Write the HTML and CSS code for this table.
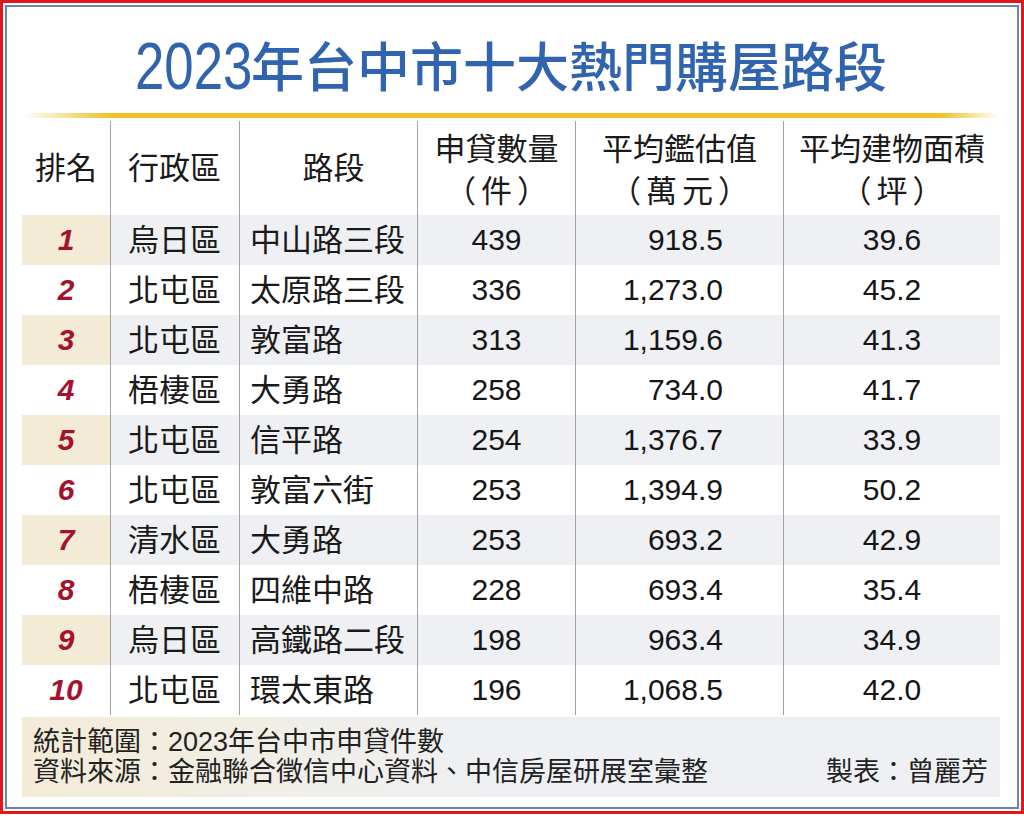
FILE: index.html
```html
<!DOCTYPE html>
<html lang="zh-Hant">
<head>
<meta charset="utf-8">
<title>2023年台中市十大熱門購屋路段</title>
<link rel="stylesheet" href="styles.css">
</head>
<body>
<div class="frame">
  <div class="inner">
    <h1 class="title"><span class="title-num">2023</span>年台中市十大熱門購屋路段</h1>
    <div class="gold-line"></div>
    <div class="table">
      <div class="row head">
        <div class="cell c1">排名</div>
        <div class="cell c2">行政區</div>
        <div class="cell c3 center">路段</div>
        <div class="cell c4 center two"><span>申貸數量</span><span class="unit">（件）</span></div>
        <div class="cell c5 center two"><span>平均鑑估值</span><span class="unit">（萬元）</span></div>
        <div class="cell c6 center two"><span>平均建物面積</span><span class="unit">（坪）</span></div>
      </div>
      <div class="row shade">
        <div class="cell c1 rank">1</div><div class="cell c2">烏日區</div><div class="cell c3">中山路三段</div><div class="cell c4 num">439</div><div class="cell c5 num">918.5</div><div class="cell c6 num">39.6</div>
      </div>
      <div class="row">
        <div class="cell c1 rank">2</div><div class="cell c2">北屯區</div><div class="cell c3">太原路三段</div><div class="cell c4 num">336</div><div class="cell c5 num">1,273.0</div><div class="cell c6 num">45.2</div>
      </div>
      <div class="row shade">
        <div class="cell c1 rank">3</div><div class="cell c2">北屯區</div><div class="cell c3">敦富路</div><div class="cell c4 num">313</div><div class="cell c5 num">1,159.6</div><div class="cell c6 num">41.3</div>
      </div>
      <div class="row">
        <div class="cell c1 rank">4</div><div class="cell c2">梧棲區</div><div class="cell c3">大勇路</div><div class="cell c4 num">258</div><div class="cell c5 num">734.0</div><div class="cell c6 num">41.7</div>
      </div>
      <div class="row shade">
        <div class="cell c1 rank">5</div><div class="cell c2">北屯區</div><div class="cell c3">信平路</div><div class="cell c4 num">254</div><div class="cell c5 num">1,376.7</div><div class="cell c6 num">33.9</div>
      </div>
      <div class="row">
        <div class="cell c1 rank">6</div><div class="cell c2">北屯區</div><div class="cell c3">敦富六街</div><div class="cell c4 num">253</div><div class="cell c5 num">1,394.9</div><div class="cell c6 num">50.2</div>
      </div>
      <div class="row shade">
        <div class="cell c1 rank">7</div><div class="cell c2">清水區</div><div class="cell c3">大勇路</div><div class="cell c4 num">253</div><div class="cell c5 num">693.2</div><div class="cell c6 num">42.9</div>
      </div>
      <div class="row">
        <div class="cell c1 rank">8</div><div class="cell c2">梧棲區</div><div class="cell c3">四維中路</div><div class="cell c4 num">228</div><div class="cell c5 num">693.4</div><div class="cell c6 num">35.4</div>
      </div>
      <div class="row shade">
        <div class="cell c1 rank">9</div><div class="cell c2">烏日區</div><div class="cell c3">高鐵路二段</div><div class="cell c4 num">198</div><div class="cell c5 num">963.4</div><div class="cell c6 num">34.9</div>
      </div>
      <div class="row">
        <div class="cell c1 rank">10</div><div class="cell c2">北屯區</div><div class="cell c3">環太東路</div><div class="cell c4 num">196</div><div class="cell c5 num">1,068.5</div><div class="cell c6 num">42.0</div>
      </div>
    </div>
    <div class="footer">
      <div class="foot-line">統計範圍：2023年台中市申貸件數</div>
      <div class="foot-line split"><span>資料來源：金融聯合徵信中心資料、中信房屋研展室彙整</span><span>製表：曾麗芳</span></div>
    </div>
  </div>
</div>
</body>
</html>
```

FILE: styles.css
```css
html, body {
  margin: 0;
  padding: 0;
  background: #ffffff;
}

body {
  font-family: "Liberation Sans", "Noto Sans CJK TC", sans-serif;
  color: #1a1a1a;
  text-spacing-trim: space-all;
}

.frame {
  width: 1024px;
  height: 814px;
  box-sizing: border-box;
  border: 3px solid #e3161c;
  padding: 2px;
  background: #ffffff;
}

.inner {
  height: 100%;
  box-sizing: border-box;
  border: 2px solid #6d83ad;
  padding: 0 17px 0 15px;
  display: flex;
  flex-direction: column;
}

.title {
  margin: 0;
  height: 106px;
  box-sizing: border-box;
  padding-top: 8px;
  display: flex;
  align-items: center;
  justify-content: center;
  font-family: "Noto Sans CJK TC", sans-serif;
  font-weight: 500;
  font-size: 53px;
  letter-spacing: 0;
  color: #3164ae;
  line-height: 1;
}

.title-num {
  display: inline-block;
  font-family: "Liberation Sans", sans-serif;
  font-weight: 400;
  font-size: 66px;
  letter-spacing: 0;
  transform: scaleX(0.8);
  transform-origin: left center;
  margin-right: -31px;
  position: relative;
  top: 2px;
}

.gold-line {
  height: 5px;
  background: linear-gradient(to right, rgba(240, 196, 40, 0) 0%, #eec22a 9%, #eec22a 94%, rgba(240, 196, 40, 0) 100%);
  margin-bottom: 3px;
}

.table {
  display: flex;
  flex-direction: column;
}

.row {
  display: grid;
  grid-template-columns: 88px 129px 178px 158px 208px 217px;
  height: 50px;
}

.row.head {
  height: 94px;
}

.cell {
  display: flex;
  align-items: center;
  font-size: 31px;
  line-height: 1;
  color: #1a1a1a;
}

.cell + .cell {
  border-left: 1px solid #a3a3a3;
}

.head .cell {
  font-weight: 400;
  color: #1a1a1a;
}

.c1 {
  justify-content: center;
}

.c2 {
  padding-left: 17px;
}

.c3 {
  padding-left: 10px;
}

.center {
  justify-content: center;
}

.two {
  flex-direction: column;
  justify-content: center;
  align-items: center;
  line-height: 42px;
  font-family: "Noto Sans CJK TC", sans-serif;
}

.unit {
  letter-spacing: 5px;
  padding-left: 5px;
}

.rank {
  font-family: "Liberation Sans", sans-serif;
  font-weight: 700;
  font-style: italic;
  font-size: 30px;
  color: #a3132f;
}

.num {
  font-family: "Liberation Sans", sans-serif;
  font-size: 30px;
  color: #161616;
}

.c4.num, .c6.num {
  justify-content: center;
}

.c5.num {
  justify-content: flex-end;
  padding-right: 60px;
}

.shade .cell {
  background: #eef0f3;
}

.shade .c1 {
  background: #f4ebd6;
}

.footer {
  margin-top: 2px;
  height: 80px;
  box-sizing: border-box;
  padding: 10px 12px 10px 11px;
  background: linear-gradient(to right, #f4ebd7 0%, #f1eee6 25%, #eef0f4 50%, #eef0f4 100%);
  display: flex;
  flex-direction: column;
  justify-content: center;
}

.foot-line {
  font-size: 27px;
  line-height: 30px;
  color: #222222;
  white-space: nowrap;
}

.split {
  display: flex;
  justify-content: space-between;
}
```
